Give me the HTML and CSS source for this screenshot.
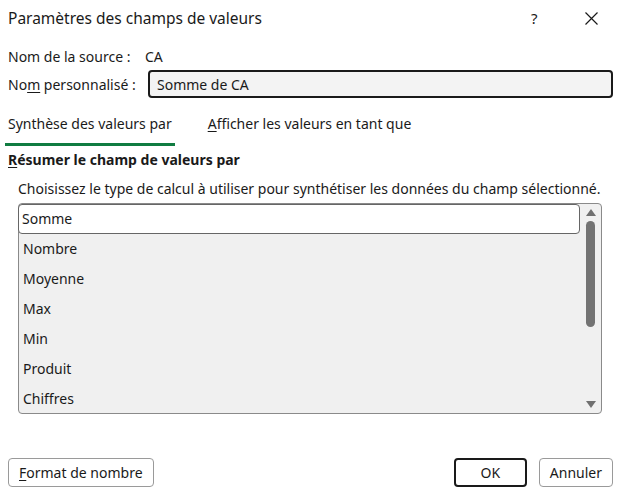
FILE: index.html
```html
<!DOCTYPE html>
<html lang="fr">
<head>
    <meta charset="UTF-8">
    <title>Paramètres des champs de valeurs</title>
    <link rel="stylesheet" href="styles.css">
</head>
<body>
    <div class="dialog">
        <div class="titlebar">
            <span class="title">Paramètres des champs de valeurs</span>
            <span class="help">?</span>
            <span class="close">
                <svg width="13" height="13" viewBox="0 0 13 13"><path d="M0.5 0.5 L12.5 12.5 M12.5 0.5 L0.5 12.5" stroke="#1a1a1a" stroke-width="1.2" fill="none"/></svg>
            </span>
        </div>

        <div class="row source-row">
            <span class="label">Nom de la source :</span>
            <span class="value">CA</span>
        </div>
        <div class="row name-row">
            <span class="label">No<u>m</u> personnalisé :</span>
            <div class="name-input">Somme de CA</div>
        </div>

        <div class="tabs">
            <div class="tab active">Synthèse des valeurs par</div>
            <div class="tab"><u>A</u>fficher les valeurs en tant que</div>
        </div>

        <div class="section">
            <div class="section-title"><u>R</u>ésumer le champ de valeurs par</div>
            <p class="hint">Choisissez le type de calcul à utiliser pour synthétiser les données du champ sélectionné.</p>
            <div class="listbox">
                <ul class="items">
                    <li class="selected">Somme</li>
                    <li>Nombre</li>
                    <li>Moyenne</li>
                    <li>Max</li>
                    <li>Min</li>
                    <li>Produit</li>
                    <li>Chiffres</li>
                </ul>
                <div class="scrollbar">
                    <span class="arrow up"></span>
                    <div class="track"><div class="thumb"></div></div>
                    <span class="arrow down"></span>
                </div>
            </div>
        </div>

        <div class="footer">
            <button class="btn"><u>F</u>ormat de nombre</button>
            <div class="spacer"></div>
            <button class="btn primary">OK</button>
            <button class="btn">Annuler</button>
        </div>
    </div>
</body>
</html>
```

FILE: styles.css
```css
/* Dialog base */
body {
    margin: 0;
    background: #ffffff;
    font-family: "Noto Sans", "Open Sans", sans-serif;
    font-size: 14px;
    color: #1a1a1a;
}

.dialog {
    width: 621px;
    height: 497px;
    box-sizing: border-box;
    padding: 0 8px;
    display: flex;
    flex-direction: column;
}

u {
    text-underline-offset: 2px;
}

/* Title bar */
.titlebar {
    height: 36px;
    display: flex;
    align-items: center;
}

.title {
    flex: 1;
    font-size: 15.5px;
}

.help {
    width: 14px;
    margin-right: 40px;
    font-size: 15px;
}

.close {
    display: flex;
    margin-right: 15px;
}

/* Name rows */
.row {
    display: flex;
    align-items: center;
}

.source-row {
    margin-top: 7px;
    height: 26px;
}

.source-row .label {
    width: 137px;
}

.name-row {
    height: 30px;
}

.name-row .label {
    width: 140px;
}

.name-input {
    flex: 1;
    height: 28px;
    box-sizing: border-box;
    border: 2px solid #1a1a1a;
    border-radius: 4px;
    background: #f3f3f3;
    padding: 0 7px;
    display: flex;
    align-items: center;
}

/* Tabs */
.tabs {
    display: flex;
    margin-top: 15px;
    margin-left: -3px;
}

.tab {
    padding: 0 3px 10px;
    margin-right: 30px;
    border-bottom: 3px solid transparent;
}

.tab.active {
    border-bottom-color: #107c41;
}

/* Summary section */
.section-title {
    font-weight: bold;
    margin-top: 4px;
}

.hint {
    margin: 10px 0 5px 10px;
}

.listbox {
    margin-left: 10px;
    width: 584px;
    height: 211px;
    box-sizing: border-box;
    border: 1px solid #8a8a8a;
    border-radius: 4px;
    background: #f0f0f0;
    display: flex;
}

.items {
    list-style: none;
    margin: 0;
    padding: 0;
    flex: 1;
}

.items li {
    height: 30px;
    line-height: 30px;
    padding-left: 4px;
    box-sizing: border-box;
}

.items li.selected {
    background: #ffffff;
    border: 1px solid #666666;
    border-radius: 4px;
    line-height: 28px;
    padding-left: 3px;
    margin-left: -1px;
}

.scrollbar {
    width: 21px;
    display: flex;
    flex-direction: column;
    align-items: center;
    padding: 5px 0;
    box-sizing: border-box;
}

.arrow {
    width: 0;
    height: 0;
    border-left: 5px solid transparent;
    border-right: 5px solid transparent;
}

.arrow.up {
    border-bottom: 7px solid #707070;
}

.arrow.down {
    border-top: 7px solid #707070;
}

.track {
    flex: 1;
    width: 100%;
    display: flex;
    justify-content: center;
    padding-top: 5px;
}

.thumb {
    width: 9px;
    height: 106px;
    background: #737373;
    border-radius: 5px;
}

/* Buttons */
.footer {
    margin-top: auto;
    margin-bottom: 10px;
    display: flex;
    gap: 12px;
}

.spacer {
    flex: 1;
}

.btn {
    font: inherit;
    color: #1a1a1a;
    height: 29px;
    min-width: 73px;
    padding: 0 10px;
    background: #ffffff;
    border: 1px solid #9a9a9a;
    border-radius: 4px;
}

.btn.primary {
    border: 2px solid #1a1a1a;
}
```
